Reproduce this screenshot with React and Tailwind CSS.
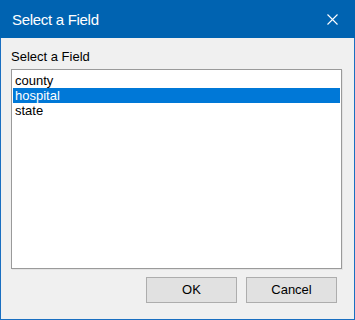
import React, { useState } from "react";

const fields = ["county", "hospital", "state"];

const CloseIcon = () => (
  <svg width="11" height="11" viewBox="0 0 11 11" className="block">
    <path d="M0.5 0.5 L10.5 10.5 M10.5 0.5 L0.5 10.5" stroke="#ffffff" strokeWidth="1.1" fill="none" />
  </svg>
);

const App = () => {
  const [selected, setSelected] = useState("hospital");

  return (
    <div
      className="w-[355px] h-[320px] flex flex-col bg-[#f0f0f0] border-x border-b border-[#1a6fc1] text-black"
      style={{ fontFamily: '"Liberation Sans", Arial, sans-serif' }}
    >
      {/* Title bar */}
      <div className="h-[38px] -mx-px flex items-center justify-between bg-[#0063b1] pl-[12px] pr-[17px]">
        <span className="text-white text-[15px] tracking-[-0.3px] leading-none">Select a Field</span>
        <CloseIcon />
      </div>

      {/* Body */}
      <div className="flex flex-col pl-[10px] pr-[12px] pt-[11px]">
        <div className="text-[13px] leading-[15px]">Select a Field</div>
        <div className="mt-[5px] h-[200px] bg-white border border-[#9a9a9a] shadow-[1px_1px_0_#e3e3e3] pt-[3px] px-px">
          {fields.map((f) => (
            <div
              key={f}
              onClick={() => setSelected(f)}
              className={`h-[15px] pl-[2px] text-[13px] leading-[15px] cursor-default ${
                selected === f ? "bg-[#0078d7] text-white" : "text-black"
              }`}
            >
              {f}
            </div>
          ))}
        </div>

        {/* Buttons */}
        <div className="flex justify-end gap-[9px] mt-[8px] mr-[5px]">
          <button className="w-[91px] h-[26px] bg-[#e1e1e1] border border-[#adadad] text-[13px] text-black">
            OK
          </button>
          <button className="w-[91px] h-[26px] bg-[#e1e1e1] border border-[#adadad] text-[13px] text-black">
            Cancel
          </button>
        </div>
      </div>
    </div>
  );
};

export default App;
